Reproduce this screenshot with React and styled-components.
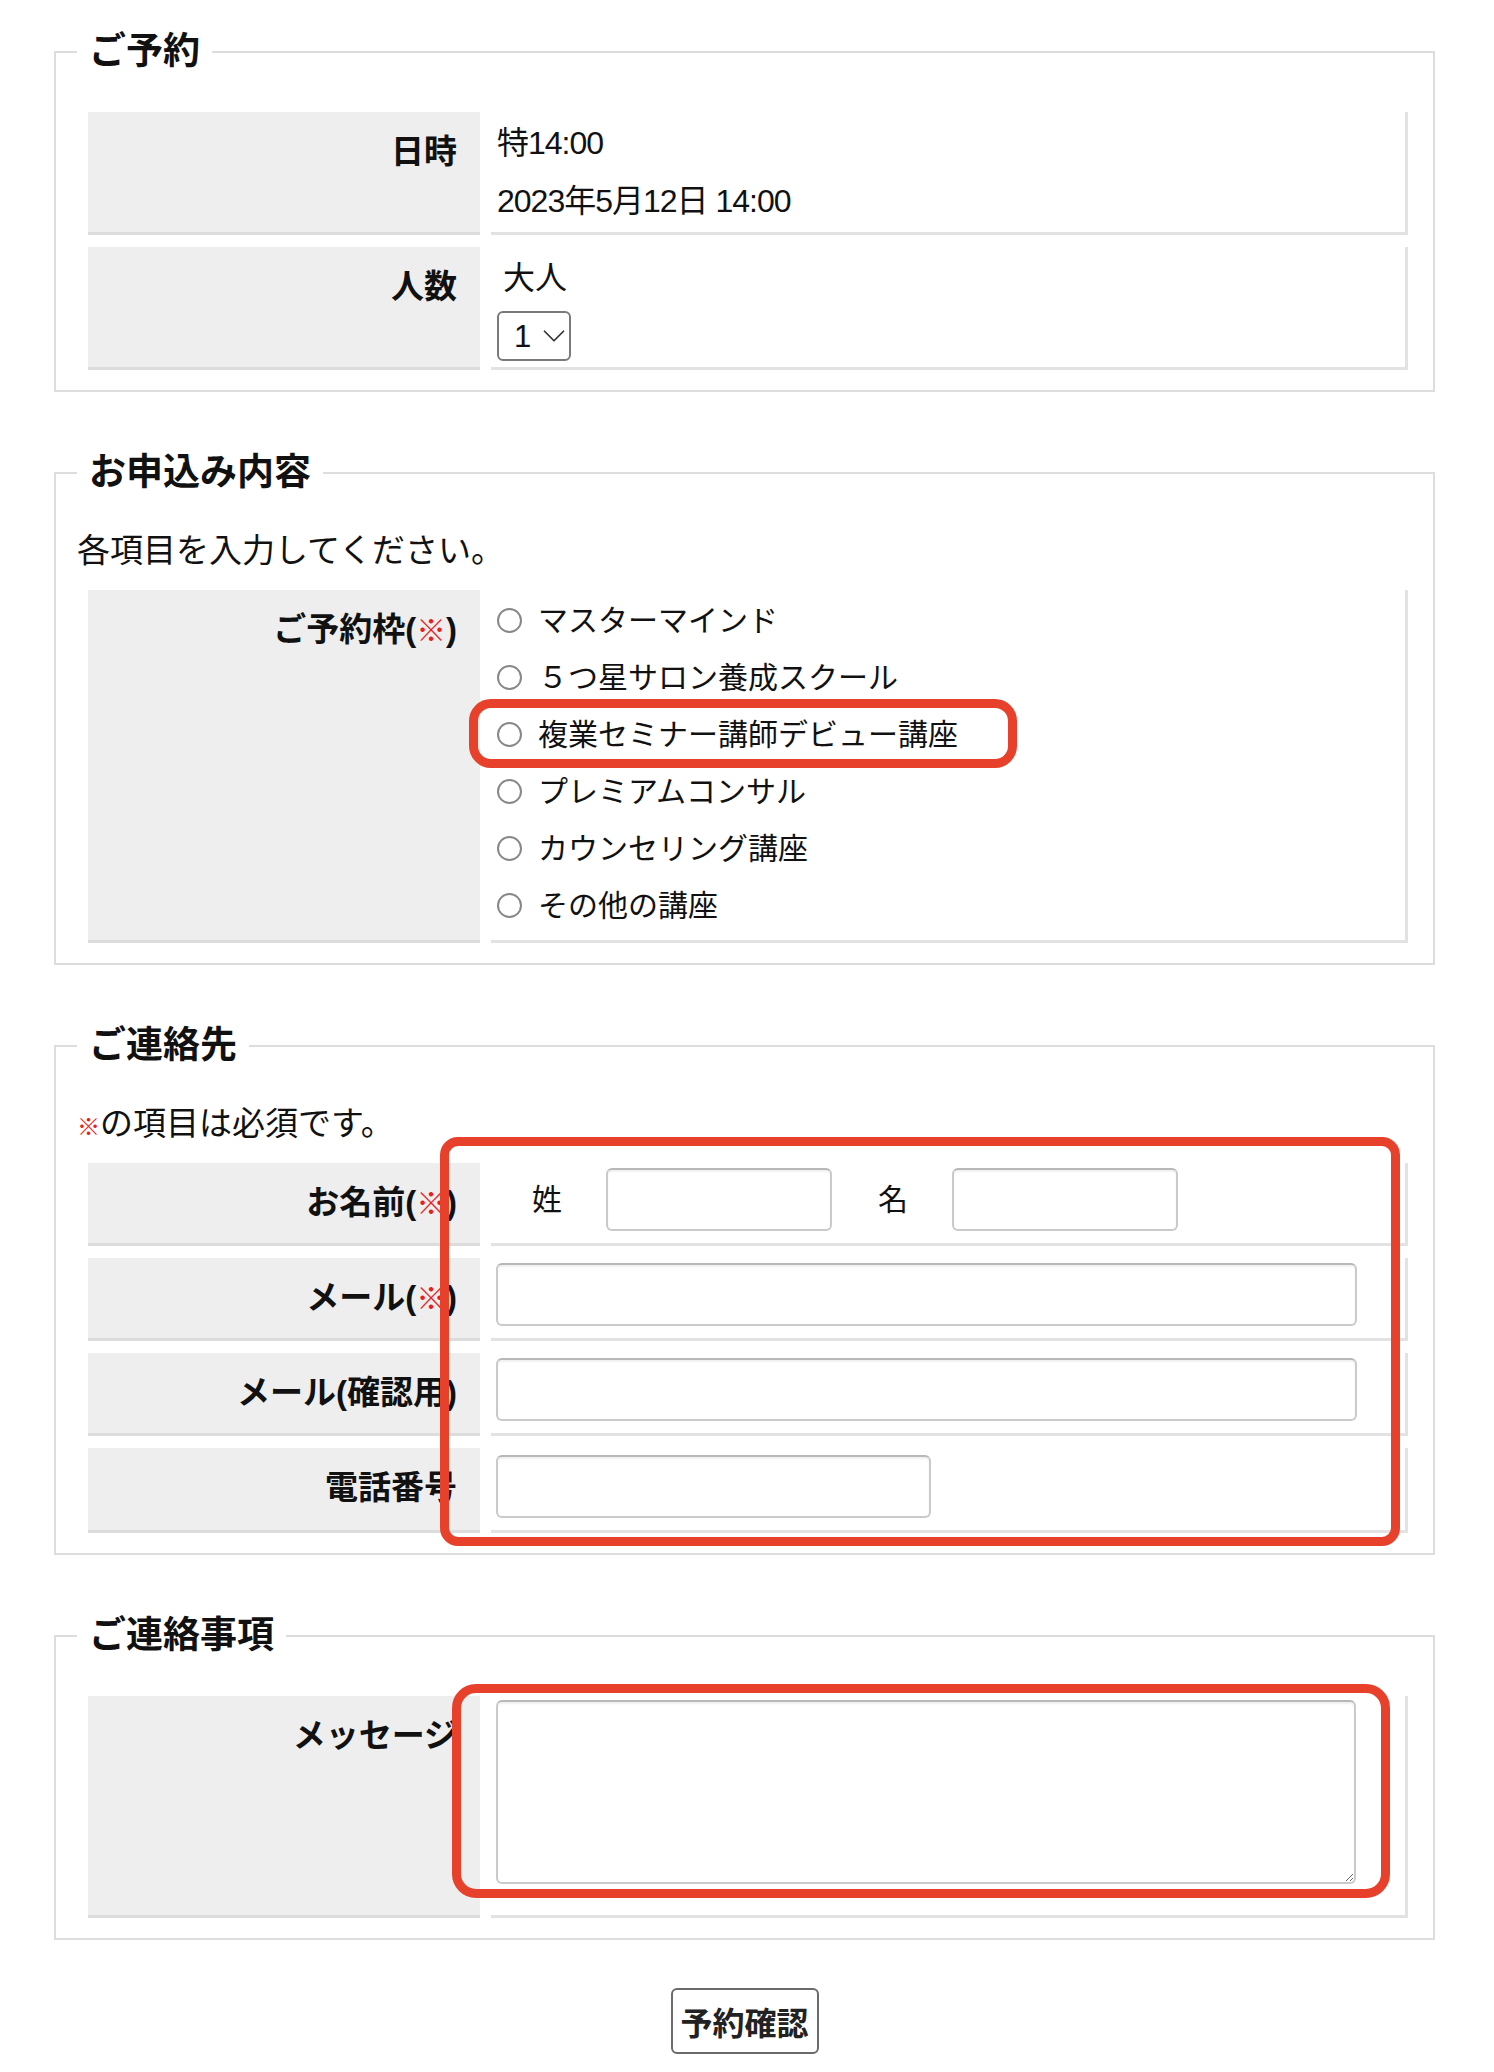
import React from 'react';
import styled, { createGlobalStyle } from 'styled-components';
import { ChevronDown } from 'lucide-react';

const GlobalStyle = createGlobalStyle`
  html, body {
    margin: 0;
    background: #fff;
  }
  body {
    font-family: "Liberation Sans", "Noto Sans CJK JP", sans-serif;
    font-size: 32px;
    color: #111;
  }
  *, *::before, *::after {
    box-sizing: border-box;
  }
`;

const Page = styled.form`
  padding: 27px 59px 19px 54px;
`;

const Fieldset = styled.fieldset`
  min-width: 0;
  margin: 0 0 56px;
  padding: 23px 14px 8px 21px;
  border: 2px solid #dddddd;
`;

const Legend = styled.legend`
  padding: 0 12px;
  font-size: 37px;
  font-weight: 700;
  line-height: 50px;
`;

const Note = styled.p`
  margin: 2px 0 0;
  font-size: 33px;
  line-height: 55px;
`;

const Mark = styled.span`
  color: #e8201a;
  font-size: ${(p) => p.$size || '0.9em'};
  line-height: 1;
`;

const TableWrap = styled.div`
  position: relative;
`;

const Table = styled.table`
  width: 100%;
  border-collapse: separate;
  border-spacing: 11px 12px;
  margin: 0;
`;

const Th = styled.th`
  width: 392px;
  padding: 11px 23px 0 10px;
  background: #eeeeee;
  border-bottom: 3px solid #dcdcdc;
  text-align: right;
  vertical-align: top;
  font-size: 33px;
  font-weight: 700;
  line-height: 58px;
  white-space: nowrap;
`;

const Td = styled.td`
  padding: ${(p) => p.$pad || '2px 6px'};
  border-right: 3px solid #e2e2e2;
  border-bottom: 3px solid #e2e2e2;
  vertical-align: top;
  line-height: 58px;
`;

const DateLine = styled.div`
  letter-spacing: -1px;
`;

const Line = styled.div`
  display: flex;
  align-items: center;
  height: 58px;
  padding-left: ${(p) => p.$indent || 0}px;
`;

const SelectBox = styled.span`
  position: relative;
  display: block;
  width: 74px;
  height: 50px;
`;

const Select = styled.select`
  appearance: none;
  display: block;
  width: 100%;
  height: 100%;
  padding: 0 0 0 15px;
  border: 2px solid #7a7a7a;
  border-radius: 6px;
  background: #fff;
  color: #111;
  font-family: "Liberation Sans", sans-serif;
  font-size: 31px;
`;

const Chevron = styled(ChevronDown)`
  position: absolute;
  right: -2px;
  top: 50%;
  transform: translateY(-50%);
  pointer-events: none;
`;

const Option = styled.label`
  position: relative;
  display: flex;
  align-items: center;
  height: 57px;
  font-size: 30px;
`;

const Radio = styled.input.attrs({ type: 'radio' })`
  appearance: none;
  flex: none;
  width: 25px;
  height: 25px;
  margin: 0 16px 0 0;
  border: 2px solid #888888;
  border-radius: 50%;
  background: #fff;
`;

const Highlight = styled.span`
  position: absolute;
  z-index: 2;
  top: ${(p) => p.$top}px;
  left: ${(p) => p.$left}px;
  width: ${(p) => p.$w}px;
  height: ${(p) => p.$h}px;
  border: 9px solid #e8412b;
  border-radius: ${(p) => p.$r}px;
  pointer-events: none;
`;

const NameRow = styled.div`
  display: flex;
  align-items: center;
`;

const NameLabel = styled.span`
  margin: 0 44px 0 ${(p) => p.$gap}px;
  font-size: 30px;
  line-height: 1;
`;

const TextInput = styled.input`
  display: block;
  width: ${(p) => p.$w}px;
  height: 63px;
  padding: 0 10px;
  border: 2px solid #cacaca;
  border-top-color: #b8b8b8;
  border-radius: 6px;
  box-shadow: inset 0 2px 2px rgba(0, 0, 0, 0.06);
  background: #fff;
  font: inherit;
`;

const TextArea = styled.textarea`
  display: block;
  width: 860px;
  height: 184px;
  margin: 2px 0 29px -1px;
  padding: 8px 10px;
  border: 2px solid #cacaca;
  border-top-color: #b8b8b8;
  border-radius: 6px;
  box-shadow: inset 0 2px 2px rgba(0, 0, 0, 0.06);
  background: #fff;
  font: inherit;
  resize: vertical;
`;

const Actions = styled.div`
  display: flex;
  justify-content: center;
  margin-top: -8px;
`;

const Submit = styled.button`
  width: 148px;
  height: 66px;
  padding: 0;
  border: 2px solid #6b6b6b;
  border-radius: 6px;
  background: #fff;
  color: #222;
  font: inherit;
  font-size: 32px;
  font-weight: 700;
`;

const courses = [
  'マスターマインド',
  '５つ星サロン養成スクール',
  '複業セミナー講師デビュー講座',
  'プレミアムコンサル',
  'カウンセリング講座',
  'その他の講座',
];

const Required = () => (
  <>
    (<Mark>※</Mark>)
  </>
);

export default function App() {
  return (
    <>
      <GlobalStyle />
      <Page onSubmit={(e) => e.preventDefault()}>
        <Fieldset>
          <Legend>ご予約</Legend>
          <Table>
            <tbody>
              <tr>
                <Th>日時</Th>
                <Td>
                  <DateLine>特14:00</DateLine>
                  <DateLine>2023年5月12日 14:00</DateLine>
                </Td>
              </tr>
              <tr>
                <Th>人数</Th>
                <Td>
                  <Line $indent={6}>大人</Line>
                  <Line>
                    <SelectBox>
                      <Select defaultValue="1">
                        {[1, 2, 3, 4, 5].map((n) => (
                          <option key={n} value={n}>
                            {n}
                          </option>
                        ))}
                      </Select>
                      <Chevron size={38} strokeWidth={1.1} color="#333" />
                    </SelectBox>
                  </Line>
                </Td>
              </tr>
            </tbody>
          </Table>
        </Fieldset>

        <Fieldset>
          <Legend>お申込み内容</Legend>
          <Note>各項目を入力してください。</Note>
          <Table>
            <tbody>
              <tr>
                <Th>
                  ご予約枠<Required />
                </Th>
                <Td $pad="2px 6px 6px">
                  {courses.map((c, i) => (
                    <Option key={c}>
                      <Radio name="course" value={c} />
                      {c}
                      {i === 2 && <Highlight $top={-7} $left={-28} $w={548} $h={69} $r={22} />}
                    </Option>
                  ))}
                </Td>
              </tr>
            </tbody>
          </Table>
        </Fieldset>

        <Fieldset>
          <Legend>ご連絡先</Legend>
          <Note>
            <Mark $size="0.7em">※</Mark>の項目は必須です。
          </Note>
          <TableWrap>
            <Table>
              <tbody>
                <tr>
                  <Th>
                    お名前<Required />
                  </Th>
                  <Td $pad="5px 6px 12px">
                    <NameRow>
                      <NameLabel $gap={35}>姓</NameLabel>
                      <TextInput $w={226} />
                      <NameLabel $gap={46}>名</NameLabel>
                      <TextInput $w={226} />
                    </NameRow>
                  </Td>
                </tr>
                <tr>
                  <Th>
                    メール<Required />
                  </Th>
                  <Td $pad="5px 6px 12px 5px">
                    <TextInput type="email" $w={861} />
                  </Td>
                </tr>
                <tr>
                  <Th>メール(確認用)</Th>
                  <Td $pad="5px 6px 12px 5px">
                    <TextInput type="email" $w={861} />
                  </Td>
                </tr>
                <tr>
                  <Th>電話番号</Th>
                  <Td $pad="7px 6px 12px 5px">
                    <TextInput type="tel" $w={435} />
                  </Td>
                </tr>
              </tbody>
            </Table>
            <Highlight $top={-14} $left={363} $w={960} $h={409} $r={18} />
          </TableWrap>
        </Fieldset>

        <Fieldset>
          <Legend>ご連絡事項</Legend>
          <TableWrap>
            <Table>
              <tbody>
                <tr>
                  <Th>メッセージ</Th>
                  <Td>
                    <TextArea />
                  </Td>
                </tr>
              </tbody>
            </Table>
            <Highlight $top={0} $left={375} $w={938} $h={214} $r={24} />
          </TableWrap>
        </Fieldset>

        <Actions>
          <Submit type="submit">予約確認</Submit>
        </Actions>
      </Page>
    </>
  );
}
